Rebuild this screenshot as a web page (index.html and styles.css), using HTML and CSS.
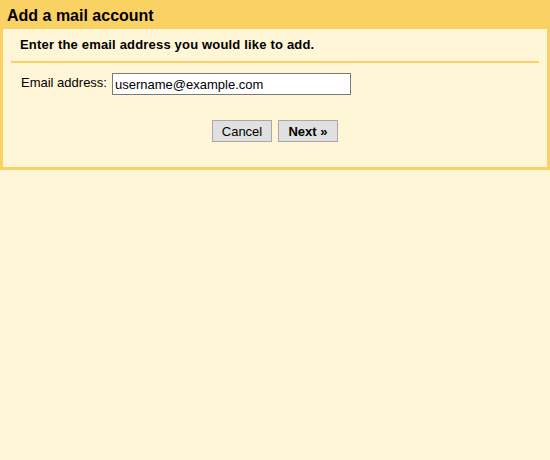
FILE: index.html
```html
<!DOCTYPE html>
<html lang="en">

<head>
  <meta charset="UTF-8">
  <meta name="viewport" content="width=device-width, initial-scale=1.0">
  <title>Add a mail account</title>
  <link rel="stylesheet" href="styles.css">
</head>

<body>
  <form class="panel">
    <h1 class="panelTitle">Add a mail account</h1>
    <div class="panelBody">
      <p class="intro">Enter the email address you would like to add.</p>
      <div class="divider"></div>
      <div class="field">
        <label class="fieldLabel" for="email">Email address:</label>
        <input type="text" id="email" class="emailInput" value="username@example.com">
      </div>
      <div class="actions">
        <button type="button" class="btn">Cancel</button>
        <button type="submit" class="btn btnPrimary">Next &raquo;</button>
      </div>
    </div>
  </form>
</body>

</html>
```

FILE: styles.css
```css
html,
body {
  margin: 0;
  background-color: #fff5d7;
  font-family: Arial, "Liberation Sans", sans-serif;
  color: #000;
}

.panel {
  background-color: #fad163;
  padding: 0 3px 3px;
  margin: 0;
}

.panelTitle {
  margin: 0;
  height: 29px;
  padding: 0 4px;
  font-size: 16px;
  line-height: 32px;
  font-weight: bold;
}

.panelBody {
  background-color: #fff5d7;
  padding-bottom: 25px;
}

.intro {
  margin: 0;
  padding: 8px 17px 9px;
  font-size: 13px;
  line-height: 15px;
  font-weight: bold;
  letter-spacing: 0.18px;
}

.divider {
  height: 2px;
  margin: 0 8px;
  background-color: #fad163;
}

.field {
  display: flex;
  align-items: flex-start;
  gap: 5px;
  padding: 10px 0 0 18px;
}

.fieldLabel {
  font-size: 13px;
  line-height: 15px;
  padding-top: 2px;
}

.emailInput {
  box-sizing: border-box;
  width: 239px;
  height: 22px;
  margin: 0;
  padding: 0 2px;
  border: 1px solid #7a7a7a;
  background-color: #fff;
  font-family: Arial, "Liberation Sans", sans-serif;
  font-size: 13px;
  color: #000;
  outline: none;
}

.actions {
  display: flex;
  justify-content: center;
  gap: 6px;
  padding-top: 25px;
}

.btn {
  box-sizing: border-box;
  width: 60px;
  height: 22px;
  padding: 0;
  border: 1px solid #a8a8a8;
  background-color: #e0e0e0;
  font-family: Arial, "Liberation Sans", sans-serif;
  font-size: 13px;
  color: #000;
  cursor: pointer;
}

.btnPrimary {
  font-weight: bold;
}
```
